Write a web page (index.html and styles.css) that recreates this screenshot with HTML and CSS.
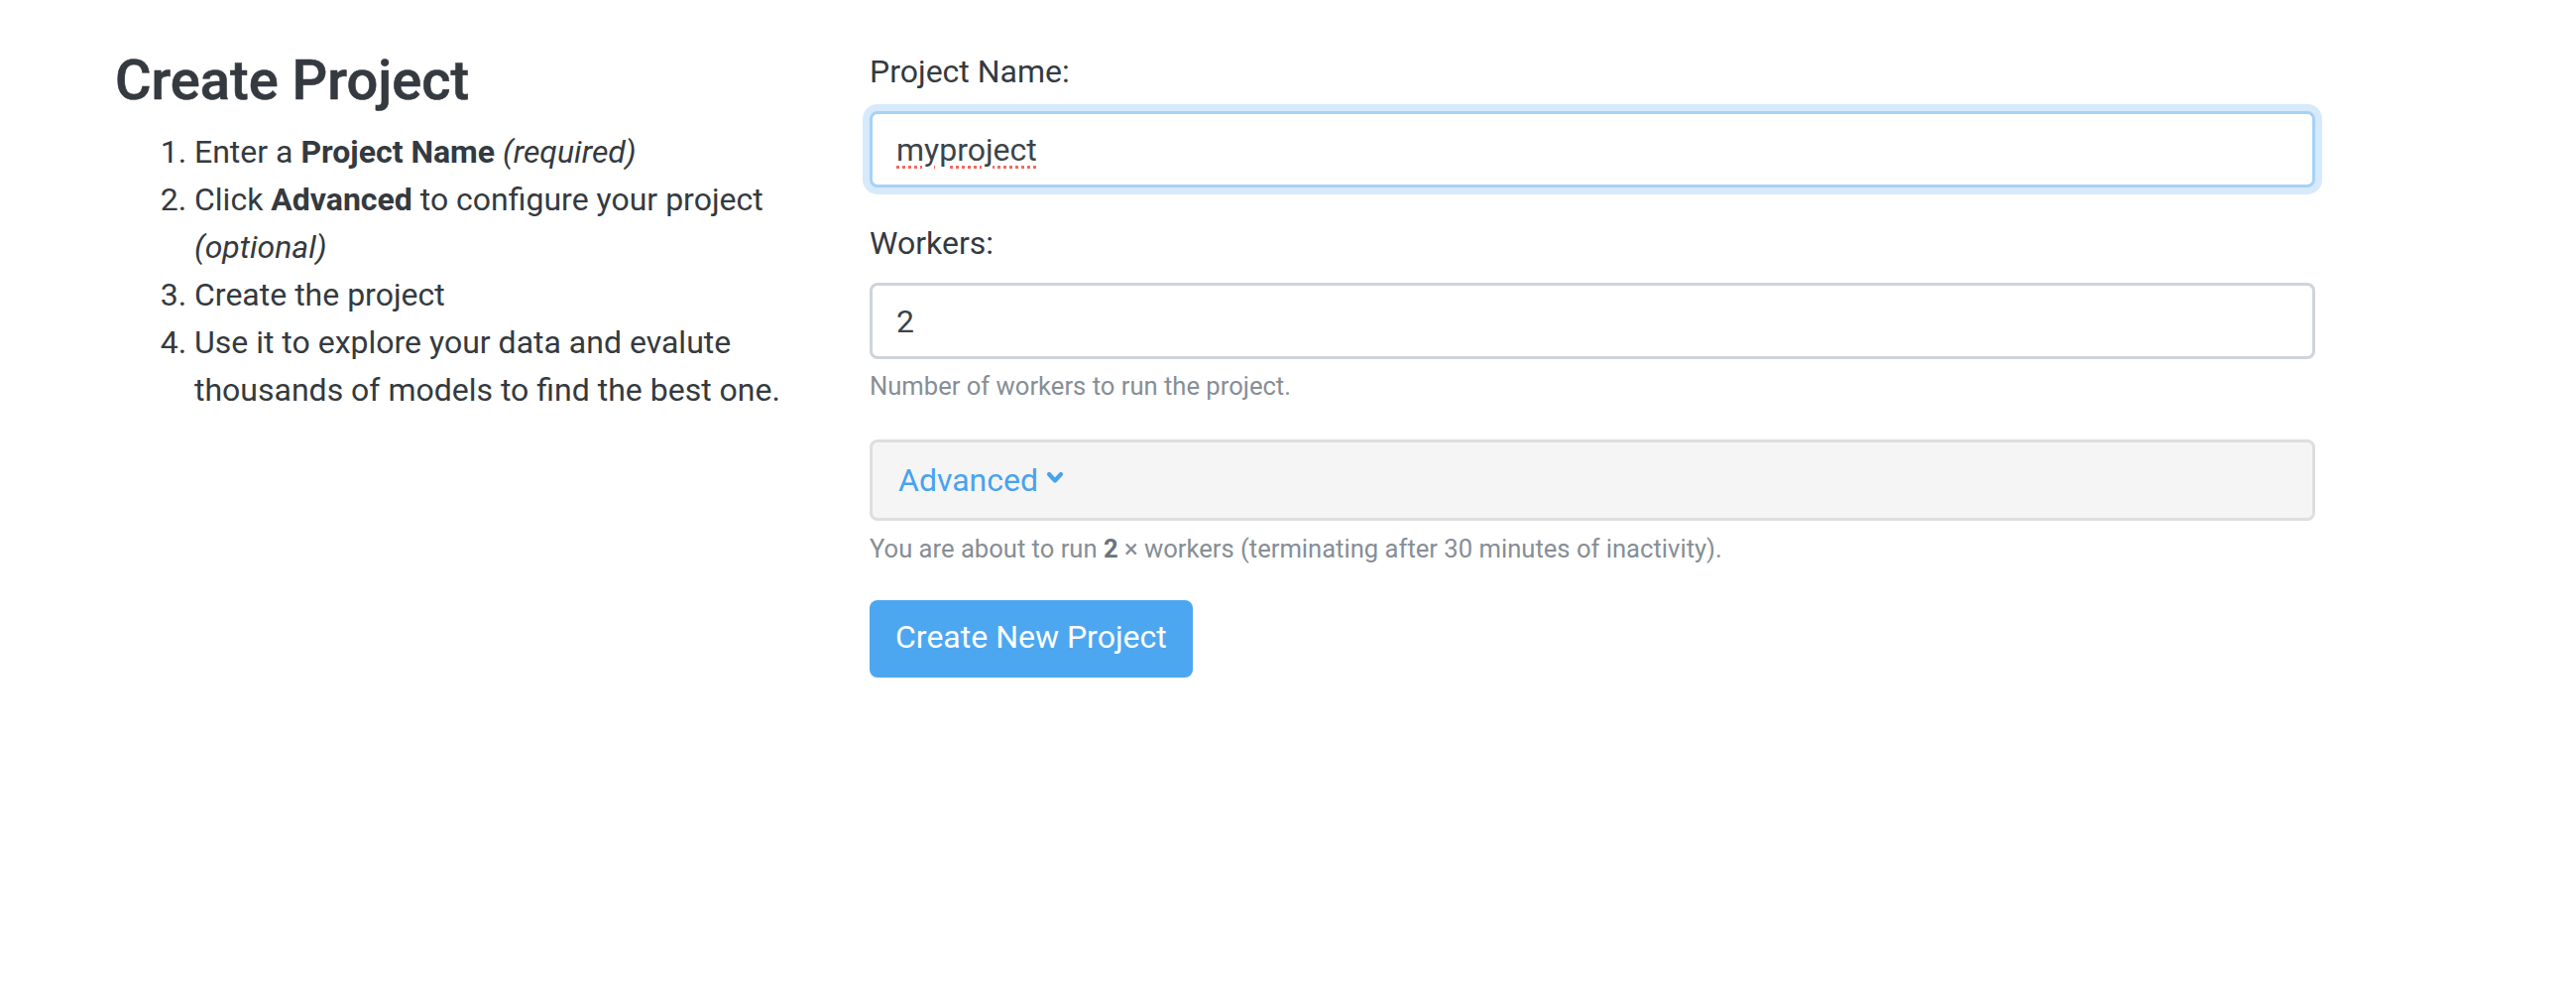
FILE: index.html
```html
<!DOCTYPE html>
<html lang="en">
<head>
<meta charset="utf-8">
<title>Create Project</title>
<link rel="stylesheet" href="styles.css">
</head>
<body>
<div class="page">
  <div class="col-left">
    <h3 class="title">Create Project</h3>
    <ol class="steps">
      <li>Enter a <b>Project Name</b> <i>(required)</i></li>
      <li>Click <b>Advanced</b> to configure your project <i>(optional)</i></li>
      <li>Create the project</li>
      <li>Use it to explore your data and evalute thousands of models to find the best one.</li>
    </ol>
  </div>
  <div class="col-right">
    <form class="form">
      <div class="form-group">
        <label class="label" for="name">Project Name:</label>
        <input class="control focused spell" id="name" type="text" value="myproject">
      </div>
      <div class="form-group">
        <label class="label" for="workers">Workers:</label>
        <input class="control" id="workers" type="text" value="2">
        <div class="help">Number of workers to run the project.</div>
      </div>
      <div class="advanced">
        <span class="adv-link">Advanced
          <svg class="chev" viewBox="0 0 18 13" width="18" height="13" aria-hidden="true"><path d="M3 3 L9 9.5 L15 3" fill="none" stroke="currentColor" stroke-width="4.2" stroke-linecap="round" stroke-linejoin="round"/></svg>
        </span>
      </div>
      <div class="help summary">You are about to run <b>2</b> × workers (terminating after 30 minutes of inactivity).</div>
      <button class="btn" type="button">Create New Project</button>
    </form>
  </div>
</div>
</body>
</html>
```

FILE: styles.css
```css
html, body {
  margin: 0;
  padding: 0;
  background: #ffffff;
}

body {
  font-family: Roboto, "Liberation Sans", Arial, sans-serif;
  font-size: 32px;
  line-height: 48px;
  color: #343a40;
}

.page {
  display: flex;
  padding: 48px 0 0 86px;
}

.col-left {
  width: 761px;
  padding: 0 30px;
  box-sizing: border-box;
}

.col-right {
  width: 1518px;
  padding: 0 30px;
  box-sizing: border-box;
}

.title {
  margin: 0 0 14px 0;
  font-size: 56px;
  line-height: 1.2;
  font-weight: 500;
  color: #343a40;
  -webkit-text-stroke: 0.6px #343a40;
}

.steps {
  margin: 0;
  padding-left: 80px;
}

.steps b {
  font-weight: 700;
}

.form {
  margin: 0;
}

.form-group {
  margin-bottom: 32px;
}

.label {
  display: block;
  margin-bottom: 16px;
}

.control {
  display: block;
  width: 100%;
  height: 77px;
  box-sizing: border-box;
  padding: 0 24px;
  font-family: Roboto, "Liberation Sans", Arial, sans-serif;
  font-size: 32px;
  color: #3d4349;
  background: #fff;
  border: 3px solid #ced4da;
  border-radius: 8px;
  outline: none;
}

.control.focused {
  border-color: #a6d2f6;
  box-shadow: 0 0 0 7px #d6eafc;
}

.control.spell {
  text-decoration: underline dotted #ef6a62;
  text-decoration-thickness: 3px;
  text-underline-offset: 5px;
}

.help {
  margin-top: 8px;
  font-size: 25.6px;
  line-height: 38.4px;
  color: #868e96;
}

.help b {
  font-weight: 700;
  color: #6c737a;
}

.advanced {
  margin-top: 35px;
  height: 82px;
  box-sizing: border-box;
  display: flex;
  align-items: center;
  padding: 0 26px;
  background: #f5f5f5;
  border: 3px solid #dedede;
  border-radius: 8px;
}

.adv-link {
  display: flex;
  align-items: center;
  gap: 8px;
  font-size: 32px;
  color: #47a3ee;
}

.chev {
  margin-top: -6px;
}

.summary {
  margin-top: 9px;
}

.btn {
  display: block;
  margin-top: 32px;
  height: 78px;
  padding: 0 26px 3px;
  font-family: Roboto, "Liberation Sans", Arial, sans-serif;
  font-size: 32px;
  color: #ffffff;
  background: #4da7f0;
  border: none;
  border-radius: 8px;
}
```
